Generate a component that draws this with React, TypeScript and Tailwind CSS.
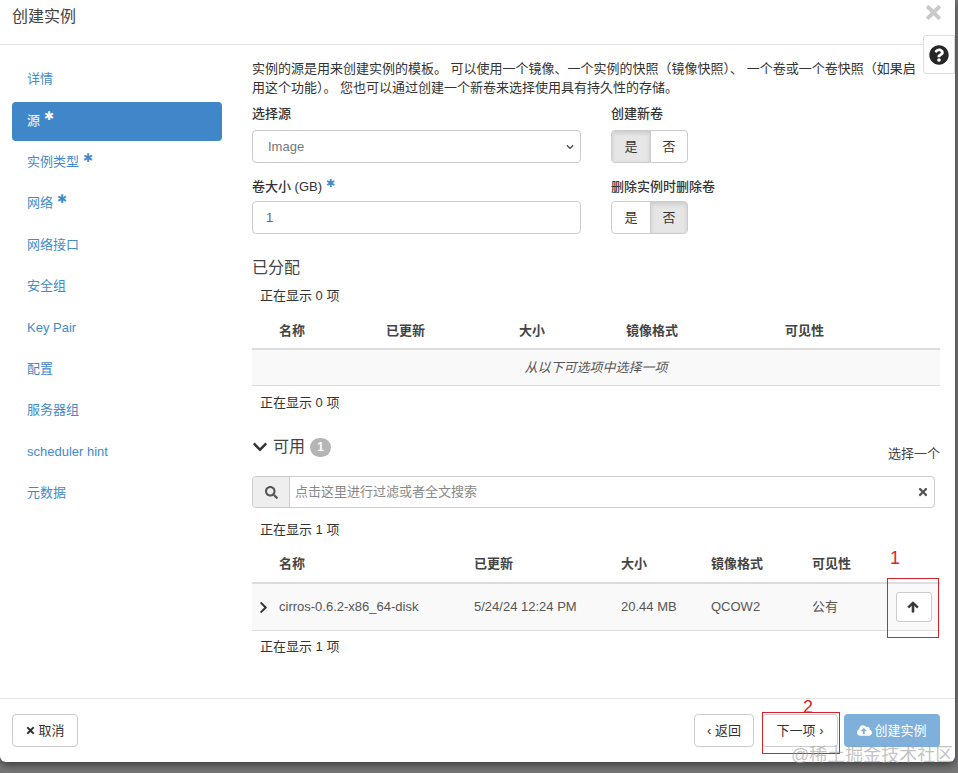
import { FaArrowUp, FaChevronDown, FaChevronRight, FaCloudUploadAlt, FaQuestionCircle, FaSearch, FaTimes } from 'react-icons/fa'

const navItems = [
  { label: '详情' },
  { label: '源', required: true, active: true },
  { label: '实例类型', required: true },
  { label: '网络', required: true },
  { label: '网络接口' },
  { label: '安全组' },
  { label: 'Key Pair' },
  { label: '配置' },
  { label: '服务器组' },
  { label: 'scheduler hint' },
  { label: '元数据' },
]

function Toggle({ active }: { active: 'yes' | 'no' }) {
  const on = 'bg-[#e6e6e6] shadow-[inset_0_2px_4px_rgba(0,0,0,0.125)]'
  return (
    <div className="flex w-[77px] h-[33px] border border-[#ccc] rounded-[4px] overflow-hidden text-[13px] text-[#333]">
      <div className={`w-[38px] flex items-center justify-center ${active === 'yes' ? on : ''}`}>是</div>
      <div className={`flex-1 flex items-center justify-center border-l border-[#ccc] ${active === 'no' ? on : ''}`}>否</div>
    </div>
  )
}

function Showing({ text, className = '' }: { text: string; className?: string }) {
  return <div className={`pl-2 text-[13px] leading-[18px] text-[#333] ${className}`}>{text}</div>
}

export default function App() {
  return (
    <div
      className="relative h-[773px] w-[958px] overflow-hidden bg-[#777]"
      style={{ fontFamily: '"Liberation Sans", "Noto Sans CJK SC", sans-serif' }}
    >
      <div className="relative flex h-[762px] w-[955px] flex-col rounded-br-[6px] rounded-bl-[6px] bg-white text-[13px] text-[#333] shadow-[0_3px_9px_rgba(0,0,0,0.5)]">
        {/* header */}
        <div className="flex h-[45px] shrink-0 items-start justify-between border-b border-[#e5e5e5] pl-3 pr-[11px]">
          <div className="pt-[6px] text-[16px] leading-[22px] text-[#444]">创建实例</div>
          <FaTimes className="mt-[2px] text-[#c9c9c9]" size={21} />
        </div>

        <div className="flex min-h-0 flex-1">
          {/* side nav */}
          <div className="w-[210px] ml-3 shrink-0 pt-[15.5px]">
            <div className="grid auto-rows-[39px] gap-y-[2.4px]">
              {navItems.map((item) => (
                <div
                  key={item.label}
                  className={`flex items-center rounded-[4px] pb-[2px] pl-[15px] text-[13px] ${
                    item.active ? 'bg-[#3f87c8] text-white' : 'text-[#428bca]'
                  }`}
                >
                  {item.label}
                  {item.required && <span className="ml-1 -mt-2 text-[12px] leading-none">✱</span>}
                </div>
              ))}
            </div>
          </div>

          {/* content */}
          <div className="ml-[30px] w-[688px] pt-[14px]">
            <p className="w-[672px] text-[13px] leading-[19px]">
              实例的源是用来创建实例的模板。 可以使用一个镜像、一个实例的快照（镜像快照）、 一个卷或一个卷快照（如果启用这个功能）。 您也可以通过创建一个新卷来选择使用具有持久性的存储。
            </p>

            <div className="mt-[8px] flex">
              <div className="w-[329px]">
                <div className="text-[13px] font-medium leading-[18px] text-[#333]">选择源</div>
                <div className="mt-[7px] flex h-[33px] items-center justify-between rounded-[4px] border border-[#ccc] pl-[15px] pr-[6px] text-[#777]">
                  Image
                  <FaChevronDown className="text-[#444]" size={8} />
                </div>
                <div className="mt-[15px] text-[13px] font-medium leading-[18px] text-[#333]">
                  卷大小 (GB) <span className="relative -top-1 text-[11px] text-[#428bca]">✱</span>
                </div>
                <div className="mt-[5px] flex h-[33px] items-center rounded-[4px] border border-[#ccc] pl-[13px] text-[#666]">1</div>
              </div>
              <div className="ml-[30px]">
                <div className="text-[13px] font-medium leading-[18px] text-[#333]">创建新卷</div>
                <div className="mt-[7px]"><Toggle active="yes" /></div>
                <div className="mt-[15px] text-[13px] font-medium leading-[18px] text-[#333]">删除实例时删除卷</div>
                <div className="mt-[5px]"><Toggle active="no" /></div>
              </div>
            </div>

            <div className="mt-[23px] text-[16px] leading-[22px] text-[#444]">已分配</div>
            <Showing text="正在显示 0 项" className="mt-[8px]" />

            <div className="grid h-[43px] grid-cols-[107px_133px_107px_159px_1fr] items-center pl-[27px] pt-[8px] font-bold text-[#444]">
              <div>名称</div>
              <div>已更新</div>
              <div>大小</div>
              <div>镜像格式</div>
              <div>可见性</div>
            </div>
            <div className="flex h-[38px] items-center justify-center border-b border-t-2 border-[#ddd] bg-[#f9f9f9] italic text-[#555]">
              从以下可选项中选择一项
            </div>
            <Showing text="正在显示 0 项" className="mt-[8px]" />

            <div className="mt-[24px] flex items-end justify-between">
              <div className="mb-[5px] flex items-center text-[16px] leading-[22px] text-[#444]">
                <FaChevronDown size={16} className="text-[#333]" />
                <span className="ml-[5px]">可用</span>
                <span className="ml-[5px] flex h-[19px] w-[21px] items-center justify-center rounded-full bg-[#b5b5b5] text-[12px] font-bold text-white">1</span>
              </div>
              <div className="text-[13px] leading-[18px] text-[#444]">选择一个</div>
            </div>

            <div className="mt-[13px] flex h-[32px] w-[683px] rounded-[4px] border border-[#ccc]">
              <div className="flex w-[37px] items-center justify-center border-r border-[#ccc] bg-[#eee] rounded-l-[4px]">
                <FaSearch size={13} className="text-[#555]" />
              </div>
              <div className="flex flex-1 items-center justify-between pl-[5px] pr-[5px] text-[#888]">
                点击这里进行过滤或者全文搜索
                <FaTimes size={12} className="text-[#555]" />
              </div>
            </div>
            <Showing text="正在显示 1 项" className="mt-[13px]" />

            <div className="grid h-[45px] grid-cols-[195px_147px_90px_101px_1fr] items-center border-b-2 border-[#ddd] pl-[27px] pt-[6px] font-bold text-[#444]">
              <div>名称</div>
              <div>已更新</div>
              <div>大小</div>
              <div>镜像格式</div>
              <div>可见性</div>
            </div>
            <div className="grid h-[47px] grid-cols-[27px_195px_147px_90px_101px_74px_1fr] items-center border-b border-[#ddd] bg-[#f9f9f9] text-[#555]">
              <FaChevronRight size={13} className="ml-[5px] text-[#333]" />
              <div>cirros-0.6.2-x86_64-disk</div>
              <div>5/24/24 12:24 PM</div>
              <div>20.44 MB</div>
              <div>QCOW2</div>
              <div>公有</div>
              <div className="ml-[10px] flex h-[30px] w-[36px] items-center justify-center rounded-[3px] border border-[#ccc] bg-white pr-[3px]">
                <FaArrowUp size={12} className="stroke-[30px] text-[#333]" />
              </div>
            </div>
            <Showing text="正在显示 1 项" className="mt-[7px]" />
          </div>
        </div>

        {/* footer */}
        <div className="flex h-[64px] shrink-0 items-start justify-between border-t border-[#e5e5e5] pl-3 pr-[15px] pt-[15px]">
          <div className="flex h-[33px] w-[66px] items-center justify-center gap-[2px] rounded-[4px] border border-[#ccc]">
            <FaTimes size={11} className="text-[#333]" />
            取消
          </div>
          <div className="flex">
            <div className="flex h-[33px] w-[60px] items-center justify-center rounded-[4px] border border-[#ccc]">‹ 返回</div>
            <div className="ml-[8px] flex h-[33px] w-[76px] items-center justify-center rounded-[4px] border border-[#ccc]">下一项 ›</div>
            <div className="ml-[6px] flex h-[33px] w-[96px] items-center justify-center gap-[2px] rounded-[4px] bg-[#7fb0db] text-white">
              <FaCloudUploadAlt size={15} />
              创建实例
            </div>
          </div>
        </div>
      </div>

      {/* help tab */}
      <div className="absolute left-[923px] top-[35px] flex h-[39px] w-[32px] items-center justify-center rounded-l-[3px] border border-[#ddd] bg-white">
        <FaQuestionCircle size={20} className="text-[#262626]" />
      </div>

      {/* screenshot annotations */}
      <div className="absolute left-[887px] top-[578px] h-[60px] w-[52px] border border-[#d8232a]" />
      <div className="absolute left-[890px] top-[547px] text-[18px] leading-[22px] text-[#d8232a]">1</div>
      <div className="absolute left-[762px] top-[712px] h-[42px] w-[78px] border border-[#d8232a]" />
      <div className="absolute left-[803px] top-[696px] text-[18px] leading-[22px] text-[#d8232a]">2</div>
      <div className="absolute left-[791px] top-[744px] text-[18px] leading-[22px] text-[#9a9a9a]/60">@稀土掘金技术社区</div>
    </div>
  )
}
